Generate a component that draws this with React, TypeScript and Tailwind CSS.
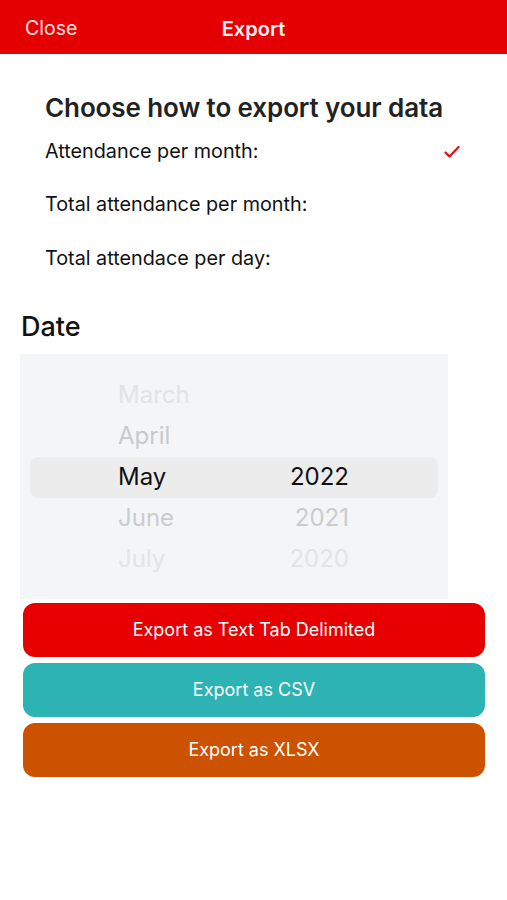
import React from 'react';

const options = [
  { label: 'Attendance per month:', checked: true },
  { label: 'Total attendance per month:', checked: false },
  { label: 'Total attendace per day:', checked: false },
];

const pickerRows = [
  { month: 'March', year: '', color: 'text-[#e2e3e5]' },
  { month: 'April', year: '', color: 'text-[#c9cacc]' },
  { month: 'May', year: '2022', color: 'text-[#111111]' },
  { month: 'June', year: '2021', color: 'text-[#cbcccd]' },
  { month: 'July', year: '2020', color: 'text-[#e3e4e6]' },
];

const buttons = [
  { label: 'Export as Text Tab Delimited', bg: 'bg-[#e60000]' },
  { label: 'Export as CSV', bg: 'bg-[#2db3b4]' },
  { label: 'Export as XLSX', bg: 'bg-[#cc5200]' },
];

export default function App() {
  return (
    <div className="min-h-[900px] w-[507px] bg-white font-['Inter',sans-serif]">
      {/* Nav bar */}
      <div className="relative flex h-[54px] items-center border-b border-[#c81010] bg-[#e40000] px-[25px] pt-[4px]">
        <span className="text-[19.5px] text-[#fbe0e0]">Close</span>
        <span className="absolute left-1/2 -translate-x-1/2 text-[20px] font-semibold text-[#fdf0f0]">
          Export
        </span>
      </div>

      {/* Export choices */}
      <div className="px-[45px] pt-[36px]">
        <h1 className="text-[26px] font-semibold leading-[36px] tracking-[-0.1px] text-[#222222]">
          Choose how to export your data
        </h1>
        <div className="mt-[9px] flex flex-col">
          {options.map((o) => (
            <div key={o.label} className="flex h-[53.5px] items-center justify-between pb-[20px]">
              <span className="text-[19.8px] text-[#111111]">{o.label}</span>
              {o.checked && (
                <svg width="16" height="14" viewBox="0 0 16 14" className="mr-[2px]">
                  <path
                    d="M1.5 7.5 L5.5 11.5 L14.5 2"
                    fill="none"
                    stroke="#e0101a"
                    strokeWidth="2.2"
                    strokeLinecap="round"
                    strokeLinejoin="round"
                  />
                </svg>
              )}
            </div>
          ))}
        </div>
      </div>

      {/* Date */}
      <div className="px-[21px] pt-[14px]">
        <h2 className="text-[27px] font-medium leading-[34px] text-[#111111]">Date</h2>
      </div>

      {/* Picker */}
      <div className="ml-[20px] mt-[10px] w-[428px] bg-[#f3f5f7] pb-[19px] pt-[21px]">
        <div className="flex flex-col">
          {pickerRows.map((r) => (
            <div
              key={r.month}
              className={`mx-[10px] flex h-[41px] items-center rounded-[8px] text-[24px] ${r.color} ${
                r.year === '2022' ? 'bg-[#ececed]' : ''
              }`}
            >
              <span className="ml-[88px] w-[120px]">{r.month}</span>
              <span className="w-[111px] text-right">{r.year}</span>
            </div>
          ))}
        </div>
      </div>

      {/* Buttons */}
      <div className="mt-[4px] flex flex-col gap-[6px] pl-[23px] pr-[22px]">
        {buttons.map((b) => (
          <button
            key={b.label}
            className={`flex h-[54px] items-center justify-center rounded-[12px] text-[18px] text-white ${b.bg}`}
          >
            {b.label}
          </button>
        ))}
      </div>
    </div>
  );
}
